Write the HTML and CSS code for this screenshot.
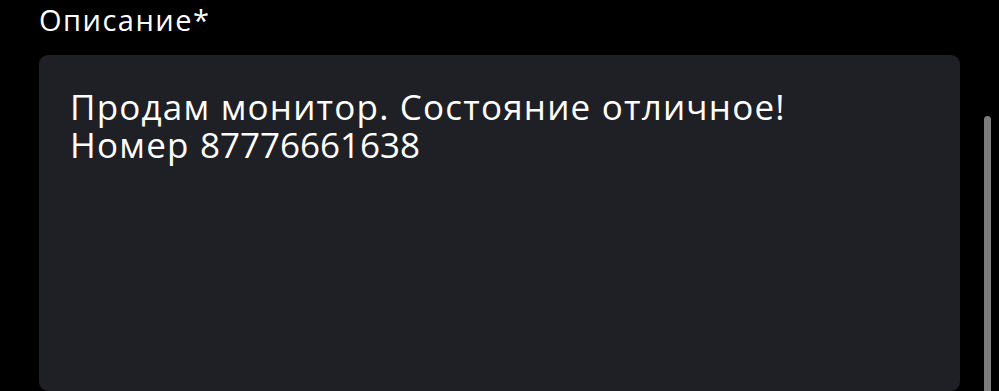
FILE: index.html
```html
<!DOCTYPE html>
<html lang="ru">
<head>
<meta charset="utf-8">
<link rel="stylesheet" href="styles.css">
</head>
<body>
<div class="page">
  <label class="label">Описание*</label>
  <div class="field">
    <p class="text">Продам монитор. Состояние отличное!<br>Номер <span class="phone">87776661638</span></p>
  </div>
</div>
<div class="scrollbar"></div>
</body>
</html>
```
FILE: styles.css
```css
html, body {
  margin: 0;
  padding: 0;
  background: #000;
  overflow: hidden;
  height: 391px;
}
.page {
  padding: 0 39px;
  width: 921px;
  font-family: "Open Sans", sans-serif;
  color: #fff;
}
.label {
  display: block;
  font-size: 29px;
  line-height: 34px;
  letter-spacing: 1.5px;
  padding-top: 3px;
  margin-left: 0;
}
.field {
  margin-top: 18px;
  background: #1f2025;
  border-radius: 9px;
  height: 336px;
  padding: 33px 31px;
  box-sizing: border-box;
}
.text {
  margin: 0;
  font-size: 35px;
  line-height: 38px;
  letter-spacing: 1.2px;
}
.phone {
  letter-spacing: 0;
}
.scrollbar {
  position: absolute;
  left: 984px;
  top: 116px;
  width: 7px;
  height: 275px;
  border-radius: 4px 4px 0 0;
  background: #7c7c7c;
}
```
